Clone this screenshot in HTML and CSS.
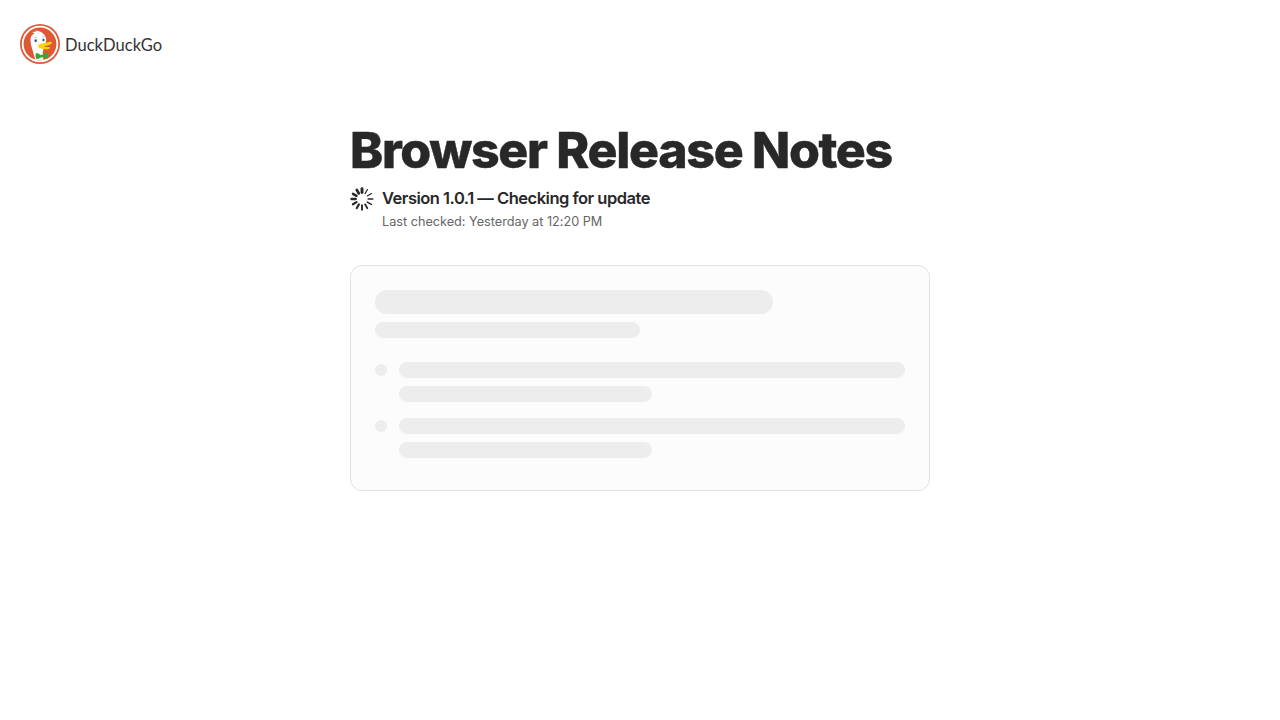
FILE: index.html
```html
<!DOCTYPE html>
<html lang="en">
<head>
<meta charset="utf-8">
<title>Browser Release Notes</title>
<link rel="stylesheet" href="styles.css">
</head>
<body>
<header class="header">
  <svg class="logo" viewBox="0 0 40 40" aria-hidden="true">
    <defs><clipPath id="disc"><circle cx="20" cy="20" r="16.4"/></clipPath></defs>
    <circle cx="20" cy="20" r="20" fill="#de5833"/>
    <circle cx="20" cy="20" r="18.3" fill="#fff"/>
    <circle cx="20" cy="20" r="16.4" fill="#de5833"/>
    <g clip-path="url(#disc)">
      <path fill="#fff" d="M15.5 37 C14 29 10.5 22 10.5 16 C10.5 12 12.5 10.2 15 9.5 L12.4 8.4 C13.8 7.6 15.5 7.8 16.5 8.3 L15.2 6.8 C20 6.6 24.3 9.4 25.6 13 C26.7 16 26 19 24.6 22 C22.5 26 22 31 24 38 Z"/>
    </g>
    <path fill="#fdd20a" d="M18.2 21.6 C19.5 19.4 24 19.3 27 18.6 C29.2 18.1 31.9 17.2 32 18.5 C32.1 20.1 28.4 21.5 25.5 21.8 C24.6 22 23.4 22 23.5 22.5 C24.8 23.3 29.9 22.5 30.1 23.7 C29.8 25.4 25 25.7 22.3 24.9 C19.5 24.3 17.4 23.1 18.2 21.6 Z"/>
    <path fill="#3ca82b" d="M15.8 29.1 C17.5 29.2 19.4 30 20.8 30.9 L22.6 30.7 C24.3 29.6 26.2 28.4 27.3 28.2 C28.1 29.8 28.1 33 27.3 34.7 C25.8 34.7 24 33.9 22.7 33.2 L20.8 33.4 C19.4 34.2 17.8 35.2 16.4 35.1 C15.4 33.5 15.4 30.5 15.8 29.1 Z"/>
    <ellipse cx="15.7" cy="16.7" rx="1.25" ry="1.35" fill="#2d4f8e"/>
    <ellipse cx="23.4" cy="16.1" rx="1.1" ry="1.25" fill="#2d4f8e"/>
    <path fill="none" stroke="#6f8db9" stroke-width=".5" d="M14 13.9 Q15.4 12.8 16.7 13.6 M22 13.1 Q23.2 12.5 24.4 13.2"/>
  </svg>
  <span class="wordmark">DuckDuckGo</span>
</header>
<main class="main">
  <h1 class="title">Browser Release Notes</h1>
  <div class="status">
    <svg class="spinner" viewBox="-12 -12 24 24" aria-hidden="true">
      <g stroke="#282828" stroke-linecap="round">
        <path stroke-width="2.9" d="M0 -10.3V-6.5"/>
        <path stroke-width="1.2" transform="rotate(30)" d="M0 -10.9V-6.1"/>
        <path stroke-width="1.2" transform="rotate(60)" d="M0 -10.9V-6.1"/>
        <path stroke-width="1.3" transform="rotate(90)" d="M0 -10.9V-6.1"/>
        <path stroke-width="1.5" transform="rotate(120)" d="M0 -10.8V-6.1"/>
        <path stroke-width="1.7" transform="rotate(150)" d="M0 -10.7V-6.1"/>
        <path stroke-width="1.9" transform="rotate(180)" d="M0 -10.7V-6.2"/>
        <path stroke-width="2.1" transform="rotate(210)" d="M0 -10.6V-6.2"/>
        <path stroke-width="2.2" transform="rotate(240)" d="M0 -10.5V-6.3"/>
        <path stroke-width="2.4" transform="rotate(270)" d="M0 -10.5V-6.3"/>
        <path stroke-width="2.5" transform="rotate(300)" d="M0 -10.4V-6.4"/>
        <path stroke-width="2.7" transform="rotate(330)" d="M0 -10.4V-6.4"/>
      </g>
    </svg>
    <div>
      <p class="version">Version 1.0.1 — Checking for update</p>
      <p class="checked">Last checked: Yesterday at 12:20 PM</p>
    </div>
  </div>
  <section class="card">
    <div class="bar heading"></div>
    <div class="bar subheading"></div>
    <ul class="items">
      <li class="item"><span class="dot"></span><div class="lines"><div class="bar"></div><div class="bar half"></div></div></li>
      <li class="item"><span class="dot"></span><div class="lines"><div class="bar"></div><div class="bar half"></div></div></li>
    </ul>
  </section>
</main>
</body>
</html>
```
FILE: styles.css
```css
* { box-sizing: border-box; }
body { margin: 0; background: #fff; color: #282828; font-family: Inter, sans-serif; }
.header { display: flex; align-items: center; height: 88px; padding-left: 20px; gap: 5px; }
.logo { width: 40px; height: 40px; flex: none; }
.wordmark { font: 400 16.5px/20px Lato, sans-serif; letter-spacing: 0.04px; color: #333; padding-top: 1px; }
.main { width: 580px; margin: 0 auto; padding-top: 32px; }
.title { margin: 0; font-size: 50px; line-height: 60px; font-weight: 800; letter-spacing: -1.33px; white-space: nowrap; -webkit-text-stroke: 0.4px #282828; }
.status { display: flex; gap: 8px; padding-top: 7px; }
.spinner { width: 24px; height: 24px; flex: none; }
.version { margin: 0; font-size: 16.5px; line-height: 22px; font-weight: 600; letter-spacing: -0.49px; white-space: nowrap; }
.checked { margin: 5px 0 0; font-size: 12.7px; line-height: 16px; letter-spacing: -0.01px; color: #666; white-space: nowrap; }
.card { margin-top: 35px; height: 226px; padding: 24px; border: 1px solid #e3e3e3; border-radius: 12px; background: #fcfcfc; }
.bar { height: 16px; border-radius: 12px; background: #ededed; }
.heading { width: 75%; height: 24px; }
.subheading { width: 50%; margin-top: 8px; }
.items { list-style: none; margin: 24px 0 0; padding: 0; display: grid; gap: 16px; }
.item { display: flex; gap: 12px; }
.dot { width: 12px; height: 12px; margin-top: 2px; border-radius: 50%; background: #ededed; flex: none; }
.lines { flex: 1; display: grid; gap: 8px; }
.half { width: 50%; }
```
